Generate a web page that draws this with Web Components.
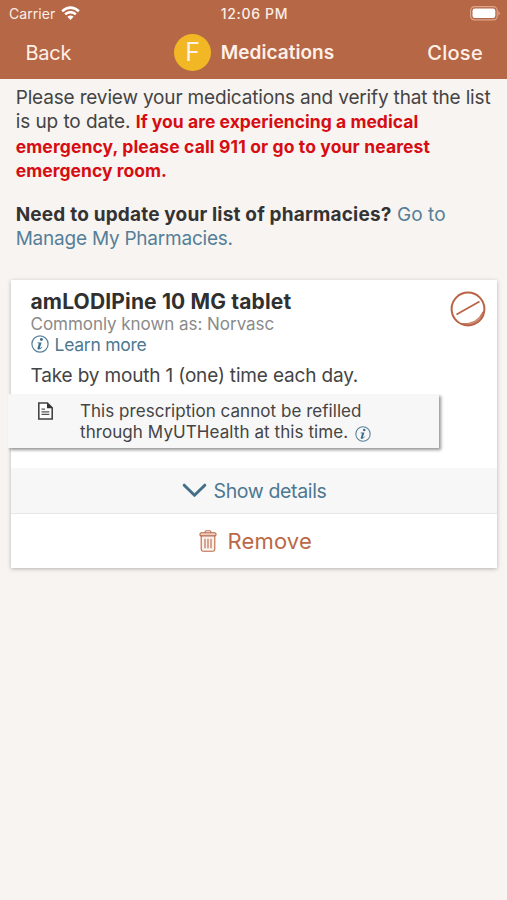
<!DOCTYPE html>
<html lang="en">
<head>
<meta charset="utf-8">
<title>Medications</title>
<style>
html,body{margin:0;height:100%}
body{background:#f8f4f1;color:#444;font-family:Inter,"Liberation Sans",sans-serif;overflow:hidden}
</style>
</head>
<body>
<medications-page></medications-page>
<script>
const define = (name, html) => {
  const template = document.createElement('template');
  template.innerHTML = html;
  customElements.define(name, class extends HTMLElement {
    constructor() {
      super();
      this.attachShadow({mode: 'open'}).append(template.content.cloneNode(true));
    }
  });
};

define('status-bar', `
<style>
:host{display:grid;grid-template-columns:1fr auto 1fr;align-items:center;height:27px;padding:0 7px 0 9px;color:#fbeee6;font-size:14px;line-height:20px;box-sizing:border-box}
.left{display:flex;align-items:center;gap:6px;letter-spacing:.06px}
.time{font-weight:500;font-size:14px;letter-spacing:.66px}
.right{display:flex;justify-content:flex-end}
svg{display:block}
</style>
<div class="left"><span>Carrier</span>
<svg width="19" height="15" viewBox="0 0 19 15" fill="none" stroke="#fff" stroke-width="2.5"><path d="M1.1 5.2Q9.5-2 17.9 5.2M4.1 8.3Q9.5 3.9 14.9 8.3"/><path d="M9.5 14 6.4 10.7Q9.5 8.2 12.6 10.7Z" fill="#fff" stroke="none"/></svg></div>
<div class="time">12:06 PM</div>
<div class="right"><svg width="30" height="15" viewBox="0 0 30 15"><rect x=".6" y=".7" width="26.6" height="13.2" rx="3.8" fill="none" stroke="#dca58d" stroke-width="1.2"/><rect x="2.5" y="2.6" width="22.8" height="9.4" rx="2.2" fill="#fff"/><path d="M28.4 5.2q1.4.6 1.4 2.1t-1.4 2.1z" fill="#dca58d"/></svg></div>`);

define('nav-bar', `
<style>
:host{display:grid;grid-template-columns:1fr auto 1fr;align-items:center;height:52px;padding:0 24px 2px 25.5px;color:#fff0e8;box-sizing:border-box;line-height:26px}
.back,.close,.name{padding-top:1px}
.back{font-size:20px;letter-spacing:-.25px}
.title{display:flex;align-items:center;gap:9.5px;font-size:19px;font-weight:600;letter-spacing:.04px}
.badge{display:flex;align-items:center;justify-content:center;width:37px;height:37px;border-radius:50%;background:#f2b725;font-size:25px;font-weight:400}
.close{font-size:20px;font-weight:500;letter-spacing:.3px;text-align:right}
</style>
<span class="back">Back</span>
<div class="title"><span class="badge">F</span><span class="name">Medications</span></div>
<span class="close">Close</span>`);

define('review-message', `
<style>
:host{display:block;padding:6.8px 0 0 15.7px;font-size:19px;line-height:24.5px;white-space:nowrap}
p{margin:0 0 19px}
.line{display:block}
b{font-size:17.5px;color:#d60d12;letter-spacing:.1px}
strong{color:#333;letter-spacing:.18px}
a{color:#557f98}
</style>
<p><span class="line" style="letter-spacing:-.165px">Please review your medications and verify that the list</span>
<span class="line"><span style="letter-spacing:-.08px">is up to date.</span> <b style="letter-spacing:.03px">If you are experiencing a medical</b></span>
<b class="line" style="letter-spacing:.13px">emergency, please call 911 or go to your nearest</b>
<b class="line" style="letter-spacing:.05px">emergency room.</b></p>
<p><span class="line"><strong>Need to update your list of pharmacies?</strong> <a style="letter-spacing:.1px">Go to</a></span>
<a class="line" style="letter-spacing:-.23px">Manage My Pharmacies.</a></p>`);

define('info-icon', `
<style>:host{display:inline-block;width:18px;height:18px}svg{display:block;width:100%;height:100%}</style>
<svg viewBox="0 0 18 18"><circle cx="9" cy="9" r="8.1" fill="none" stroke="#55809b" stroke-width="1.2"/><circle cx="10.4" cy="4.5" r="1.45" fill="#39708f"/><path d="M6.5 7.4H10.6L8.8 13.1Q9.6 13.1 11 11.8L11.4 12.2Q9.5 14.6 7.5 14.6 6.1 14.6 6.5 13.1L7.9 8.4 6.3 8.1Z" fill="#39708f"/></svg>`);

define('refill-note', `
<style>
:host{display:flex;box-sizing:border-box;width:431px;height:54px;margin-left:-3px;padding:7px 0 0 28.8px;background:#f7f7f7;box-shadow:2px 2px 3px rgba(0,0,0,.42);clip-path:inset(0 -8px -8px 0);font-size:17px;line-height:20.8px;white-space:nowrap;color:#444}
svg{display:block;margin-top:.5px;flex:none}
.text{margin-left:26.2px}
.line{display:flex}
info-icon{width:16px;height:16px;margin:4px 0 0 6.5px}
</style>
<svg width="17" height="18" viewBox="0 0 17 18"><path d="M1.8 1H10.4L15.2 5.8V17H1.8Z" fill="#fff" stroke="#444" stroke-width="1.6"/><path d="M10 .8V6.2H15.6Z" fill="#333"/><path d="M4.5 7.2H8M4.5 9.8H12.3M4.5 12.4H12.3" stroke="#555" stroke-width="1.3"/></svg>
<div class="text"><div class="line" style="letter-spacing:.04px">This prescription cannot be refilled</div>
<div class="line" style="letter-spacing:.08px">through MyUTHealth at this time.<info-icon></info-icon></div></div>`);

define('medication-card', `
<style>
:host{display:flex;flex-direction:column;box-sizing:border-box;margin:0 10px 0 11px;width:486px;height:288px;background:#fff;box-shadow:0 1px 4px rgba(0,0,0,.27)}
.top{display:flex;justify-content:space-between;padding:8.7px 11px 0 19.5px}
.pill{margin-top:2px}
h2{margin:0;font-size:21px;line-height:26px;color:#303030;letter-spacing:.15px}
.alias{margin-top:-1px;font-size:17px;line-height:20px;color:#8a8a8a;letter-spacing:-.04px}
.learn{display:flex;align-items:center;gap:6px;height:21px;font-size:17.5px;color:#4c7891;letter-spacing:-.26px}
.dose{margin-top:9px;font-size:19px;line-height:24px;letter-spacing:-.16px}
refill-note{margin-top:6.5px}
.details,.remove{display:flex;align-items:center;justify-content:center}
.details{box-sizing:border-box;height:46px;margin-top:20px;background:#f7f7f7;border-bottom:1px solid #e8e8e8;color:#4c7891;font-size:19.5px;letter-spacing:-.36px;gap:7px}
.details span{padding-top:1px}
.remove{flex:1;padding-left:3px;color:#ba6848;font-size:22px;letter-spacing:.15px;gap:10.5px}
</style>
<div class="top">
<div><h2>amLODIPine 10 MG tablet</h2><div class="alias">Commonly known as: Norvasc</div><div class="learn"><info-icon></info-icon><span>Learn more</span></div><div class="dose">Take by mouth 1 (one) time each day.</div></div>
<svg class="pill" width="36" height="36" viewBox="0 0 36 36" fill="none" stroke="#b96345"><path d="M11 32.6Q26.5 34.2 33.2 20.5A16.2 16.2 0 0 1 11 32.6Z" fill="#d99a82" stroke-width=".8"/><circle cx="18" cy="18" r="16.4" stroke-width="2"/><path d="M6.5 23.5 29.5 10.5" stroke-width="1.7"/></svg>
</div>
<refill-note></refill-note>
<div class="details"><svg width="25" height="16" viewBox="0 0 25 16" fill="none" stroke="#436f89" stroke-width="3" stroke-linecap="round" stroke-linejoin="round"><path d="M2.2 2.2 12.5 12.3 22.8 2.2"/></svg><span>Show details</span></div>
<div class="remove"><svg width="18" height="22" viewBox="0 0 18 22" fill="none" stroke="#ba6848" stroke-width="1.1"><path d="M6 2.8V2.2Q6 .8 7.4.8H10.6Q12 .8 12 2.2V2.8"/><rect x="1" y="2.8" width="16" height="3.2" rx="1.2" fill="#edcfc2"/><path d="M2.2 6V19.3Q2.2 21.2 4 21.2H14Q15.8 21.2 15.8 19.3V6Z" fill="#fbf1ec"/><path d="M6 8.8V18.2M9 8.8V18.2M12 8.8V18.2"/></svg><span>Remove</span></div>`);

define('medications-page', `
<style>
:host{display:block;height:900px}
header{background:#b66745;height:79px}
medication-card{margin-top:8.7px}
review-message{height:195.1px;box-sizing:border-box;margin-bottom:-2.8px}
</style>
<header><status-bar></status-bar><nav-bar></nav-bar></header>
<main><review-message></review-message><medication-card></medication-card></main>`);
</script>
</body>
</html>
